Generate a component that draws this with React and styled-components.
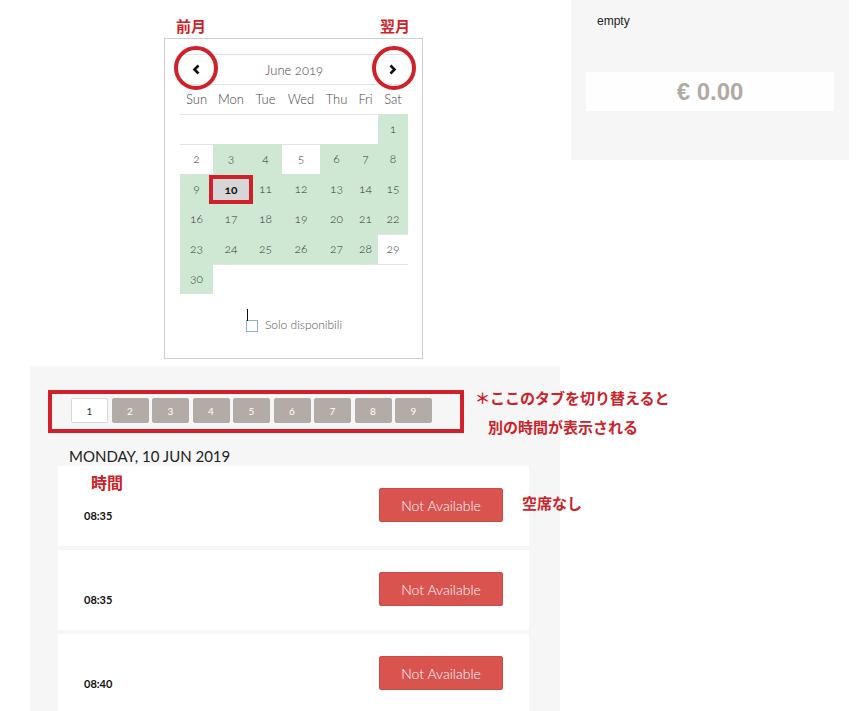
import React from "react";
import styled, { createGlobalStyle } from "styled-components";

const GlobalStyle = createGlobalStyle`
  html, body { margin: 0; padding: 0; background: #fff; }
  body { font-family: Lato, "Open Sans", sans-serif; color: #333; }
  * { box-sizing: border-box; }
`;

const Page = styled.div`
  position: relative;
  width: 862px;
  height: 711px;
  overflow: hidden;
`;

const TopRow = styled.div`
  display: flex;
  align-items: flex-start;
  height: 366px;
  padding-left: 164px;
`;

const Calendar = styled.div`
  margin-top: 38px;
  width: 259px;
  height: 321px;
  border: 1px solid #cfcfcf;
  padding: 15px 14px 0 15px;
  font-weight: 300;
  font-variant-numeric: oldstyle-nums;
`;

const MonthBar = styled.div`
  display: flex;
  align-items: center;
  justify-content: space-between;
  height: 31px;
  border-top: 1px solid #e2e2e2;
  border-bottom: 1px solid #e2e2e2;
  padding: 0 9px;
`;

const MonthTitle = styled.span`
  font-size: 13px;
  color: #444;
`;

const NavArrow = styled.span`
  display: flex;
  width: 14px;
  justify-content: center;
`;

const Grid = styled.div`
  display: grid;
  grid-template-columns: 33px 36px 33px 38px 33px 25px 30px;
`;

const DayName = styled.div`
  height: 29px;
  line-height: 29px;
  text-align: center;
  font-size: 13px;
  color: #444;
`;

const Cell = styled.div`
  position: relative;
  height: 30px;
  line-height: 28px;
  text-align: center;
  font-size: 12px;
  color: #333;
  border-top: 1px solid ${(p) => (p.$green ? "#cfe8d3" : "#e4e4e4")};
  background: ${(p) => (p.$green ? "#cfe8d3" : "#fff")};
  z-index: ${(p) => (p.$top ? 2 : "auto")};
`;

const Selected = styled.span`
  position: absolute;
  left: -4px;
  right: -4px;
  top: 0;
  bottom: 0;
  border: 4px solid #d0212a;
  background: #d6d6d6;
  font-weight: 700;
  color: #111;
  line-height: 21px;
  font-size: 12px;
`;

const CheckRow = styled.div`
  display: flex;
  align-items: center;
  justify-content: center;
  gap: 7px;
  margin-top: 23px;
  font-size: 12px;
  color: #555;
`;

const Checkbox = styled.span`
  position: relative;
  width: 12px;
  height: 12px;
  border: 1px solid #8fb0c0;
  margin-top: 2px;
  &::before {
    content: "";
    position: absolute;
    left: 0;
    top: -12px;
    width: 1px;
    height: 12px;
    background: #111;
  }
`;

const CartPanel = styled.div`
  margin-left: 148px;
  width: 278px;
  height: 160px;
  background: #f6f6f6;
  padding: 14px 15px 0 15px;
`;

const EmptyText = styled.div`
  font-family: "Liberation Sans", Arial, sans-serif;
  font-size: 12px;
  color: #222;
  padding-left: 11px;
`;

const Total = styled.div`
  margin-top: 44px;
  height: 39px;
  background: #fefefe;
  display: flex;
  align-items: center;
  justify-content: center;
  font-family: "Liberation Sans", Arial, sans-serif;
  font-weight: 700;
  font-size: 24px;
  color: #b1aaa4;
`;

const SlotsPanel = styled.div`
  position: relative;
  margin-left: 30px;
  width: 530px;
  height: 345px;
  background: #f6f6f6;
  padding: 32px 0 0 28px;
`;

const Tabs = styled.div`
  display: flex;
  gap: 3.5px;
  padding-left: 13px;
`;

const Tab = styled.div`
  width: 37px;
  height: 25px;
  display: flex;
  align-items: center;
  justify-content: center;
  font-size: 10px;
  border-radius: 2px;
  color: ${(p) => (p.$active ? "#333" : "#fff")};
  background: ${(p) => (p.$active ? "#fff" : "#b3aba5")};
  border: 1px solid ${(p) => (p.$active ? "#d8d8d8" : "#b3aba5")};
`;

const DateTitle = styled.div`
  margin-top: 24px;
  padding-left: 11px;
  font-size: 15px;
  color: #222;
  height: 19px;
  line-height: 19px;
`;

const SlotList = styled.div`
  display: flex;
  flex-direction: column;
  gap: 4px;
  width: 471px;
`;

const SlotCard = styled.div`
  display: flex;
  justify-content: space-between;
  align-items: flex-start;
  height: 80px;
  background: #fff;
  padding: 22px 26px 0 26px;
`;

const Time = styled.span`
  margin-top: 21px;
  font-size: 11px;
  font-weight: 700;
  color: #111;
  line-height: 14px;
`;

const NotAvailable = styled.button`
  width: 124px;
  height: 34px;
  background: #d9534f;
  border: 1px solid #cf4a46;
  border-radius: 2px;
  color: #fff;
  font-family: Lato, "Open Sans", sans-serif;
  font-weight: 300;
  font-size: 14px;
`;

const Note = styled.div`
  position: absolute;
  font-family: "Noto Sans CJK JP", sans-serif;
  font-weight: 700;
  font-size: ${(p) => p.$size || 14}px;
  color: #cc2229;
  white-space: nowrap;
  line-height: 1;
`;

const Ring = styled.div`
  position: absolute;
  width: 44px;
  height: 44px;
  border: 4px solid #d0212a;
  border-radius: 50%;
`;

const Frame = styled.div`
  position: absolute;
  left: 48px;
  top: 390px;
  width: 416px;
  height: 43px;
  border: 4px solid #d0212a;
`;

const Chevron = ({ dir }) => (
  <svg width="9" height="11" viewBox="0 0 9 11">
    <path
      d={dir === "left" ? "M6.5 1.5 L2.5 5.5 L6.5 9.5" : "M2.5 1.5 L6.5 5.5 L2.5 9.5"}
      fill="none"
      stroke="#111"
      strokeWidth="2.6"
    />
  </svg>
);

const days = ["Sun", "Mon", "Tue", "Wed", "Thu", "Fri", "Sat"];
const white = [2, 5, 29];

const cells = [];
for (let i = 0; i < 6; i++) cells.push(null);
for (let d = 1; d <= 30; d++) cells.push(d);
while (cells.length < 42) cells.push(null);

const slots = ["08:35", "08:35", "08:40"];

export default function App() {
  return (
    <Page>
      <GlobalStyle />
      <TopRow>
        <Calendar>
          <MonthBar>
            <NavArrow><Chevron dir="left" /></NavArrow>
            <MonthTitle>June 2019</MonthTitle>
            <NavArrow><Chevron dir="right" /></NavArrow>
          </MonthBar>
          <Grid>
            {days.map((d) => (
              <DayName key={d}>{d}</DayName>
            ))}
            {cells.map((d, i) => (
              <Cell key={i} $green={d && !white.includes(d)} $top={d === 10}>
                {d === 10 ? <Selected>10</Selected> : d}
              </Cell>
            ))}
          </Grid>
          <CheckRow>
            <Checkbox />
            <span>Solo disponibili</span>
          </CheckRow>
        </Calendar>
        <CartPanel>
          <EmptyText>empty</EmptyText>
          <Total>€ 0.00</Total>
        </CartPanel>
      </TopRow>

      <SlotsPanel>
        <Tabs>
          {[1, 2, 3, 4, 5, 6, 7, 8, 9].map((n) => (
            <Tab key={n} $active={n === 1}>{n}</Tab>
          ))}
        </Tabs>
        <DateTitle>MONDAY, 10 JUN 2019</DateTitle>
        <SlotList>
          {slots.map((t, i) => (
            <SlotCard key={i}>
              <Time>{t}</Time>
              <NotAvailable>Not Available</NotAvailable>
            </SlotCard>
          ))}
        </SlotList>
      </SlotsPanel>

      <Ring style={{ left: 174, top: 46 }} />
      <Ring style={{ left: 372, top: 46 }} />
      <Frame />
      <Note style={{ left: 176, top: 18 }} $size={15}>前月</Note>
      <Note style={{ left: 380, top: 18 }} $size={15}>翌月</Note>
      <Note style={{ left: 475, top: 390 }} $size={15}>＊ここのタブを切り替えると</Note>
      <Note style={{ left: 488, top: 419 }} $size={15}>別の時間が表示される</Note>
      <Note style={{ left: 91, top: 474 }} $size={16}>時間</Note>
      <Note style={{ left: 522, top: 495 }} $size={15}>空席なし</Note>
    </Page>
  );
}
